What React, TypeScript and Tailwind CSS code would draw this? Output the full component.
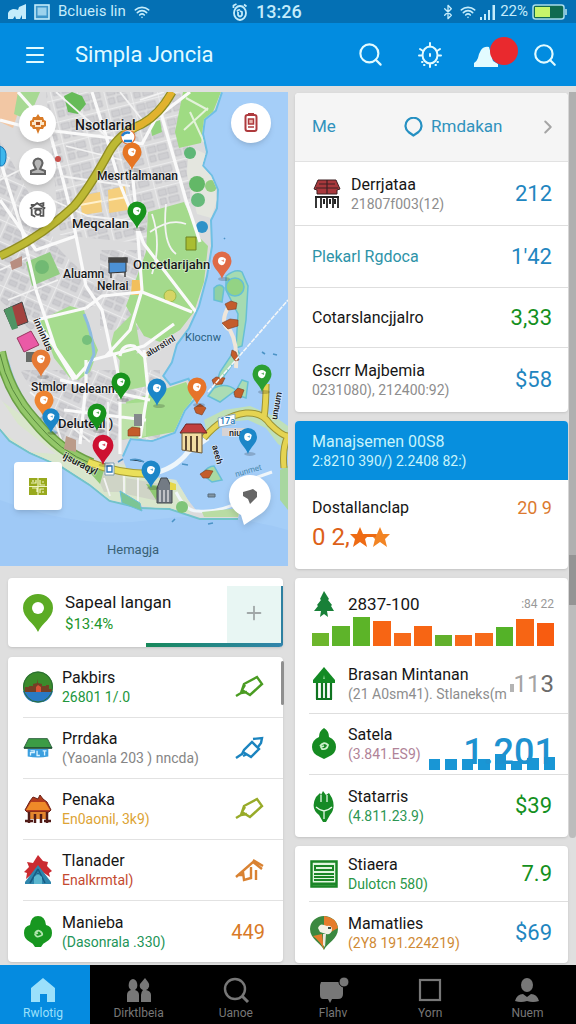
import type { ReactNode } from "react";
import { Bluetooth, ChevronRight, Menu, Plus, Search, Wifi } from "lucide-react";

const BLUE = "#1f86c0";
const GREEN = "#149021";

function StatusBar() {
  return (
    <div className="flex h-[23px] items-center bg-[#0470b4] px-2 text-[15px] leading-none text-[#c4ecfb]">
      <div className="flex w-2/5 items-center gap-2">
        <svg width="18" height="16" viewBox="0 0 18 16" fill="currentColor">
          <path d="M0 15V9q1-3 5-4 3 0 5 1l1-3 7-3v15h-4v-4l-2 4H8l-1-3-2 3z" />
        </svg>
        <svg width="16" height="16" viewBox="0 0 16 16" fill="currentColor" stroke="currentColor">
          <rect x="1" y="1" width="14" height="14" fillOpacity="0.3" strokeWidth="1.6" />
          <rect x="3.5" y="3.5" width="9" height="8" fillOpacity="0.7" stroke="none" />
        </svg>
        <span className="whitespace-nowrap">Bclueis lin</span>
        <Wifi size={16} strokeWidth={2.4} />
      </div>
      <div className="flex items-center gap-2">
        <svg width="16" height="18" viewBox="0 0 16 18" fill="none" stroke="currentColor" strokeWidth="1.8">
          <ellipse cx="8" cy="10" rx="6" ry="7" />
          <path d="M5 8.500q1-2 3-1.500M6 9v3q2 3 4 0V9l-2-1" />
          <path d="M1.500 5V2.500l3-1.500M12 1.500l2.500 2" />
        </svg>
        <span className="text-[18px] font-medium">13:26</span>
      </div>
      <div className="flex flex-1 items-center justify-end gap-1">
        <Bluetooth size={16} strokeWidth={2} />
        <Wifi size={16} strokeWidth={2.4} />
        <svg width="16" height="16" viewBox="0 0 16 16" fill="currentColor">
          <path d="M0 13h2v3H0zM4 10h2v6H4zM8 6h2v10H8zM12.500 1h2.500v15h-2.500z" />
        </svg>
        <span>22%</span>
        <svg width="36" height="16" viewBox="0 0 36 16">
          <rect x="1" y="1" width="31" height="14" rx="2.500" fill="#0f6a50" stroke="#a8dcec" strokeWidth="1.5" />
          <rect x="3" y="3" width="15" height="10" fill="#c8f56a" />
          <path d="M34 5v6" stroke="#8ac6dc" strokeWidth="2" />
        </svg>
      </div>
    </div>
  );
}

function Header() {
  return (
    <header className="flex h-[63px] items-center bg-[#028ce0] pr-[18px] pl-[23px] text-[#e2fbff]">
      <button type="button" aria-label="Menu">
        <Menu size={24} strokeWidth={2.2} />
      </button>
      <h1 className="ml-7 flex-1 text-[22px] leading-none">Simpla Joncia</h1>
      <div className="flex items-center">
        <button type="button" aria-label="Search">
          <Search size={27} strokeWidth={1.9} />
        </button>
        <button type="button" aria-label="Settings" className="ml-8">
          <svg width="28" height="28" viewBox="0 0 28 28" fill="none" stroke="currentColor" strokeWidth="2" strokeLinecap="round">
            <ellipse cx="14" cy="14" rx="7.500" ry="8.500" />
            <path d="M14 2v3.500M14 22.500V26M4 8l3 2M24 8l-3 2M3 14.500h2.500M22.500 14.500H25M6 21h.5M22 21h-.5M8 24h.5M20 24h-.5M14 13v2" />
          </svg>
        </button>
        <button type="button" aria-label="Notifications" className="relative ml-7">
          <svg width="28" height="28" viewBox="0 0 28 28" fill="currentColor">
            <path d="M2 22q3-2 4-5 1-5 3-8 3-4 8-3l4 14 5 3v3H2z" />
          </svg>
          <span className="absolute -top-1 left-[18px] size-7 rounded-full bg-[#e9292e]" />
        </button>
        <button type="button" aria-label="Find" className="ml-8">
          <Search size={26} strokeWidth={2} />
        </button>
      </div>
    </header>
  );
}

type PinProps = { x: number; y: number; color: string; scale?: number };

function Pin({ x, y, color, scale = 1 }: PinProps) {
  return (
    <g transform={`translate(${x} ${y}) scale(${scale})`}>
      <ellipse cx="2" cy="0" rx="6" ry="2" fill="#000" fillOpacity="0.18" />
      <path d="M0 0C-2-7-9.500-11-9.500-18a9.500 9.500 0 0 1 19 0C9.500-11 2-7 0 0z" fill={color} />
      <path d="M-4-18q0-4 4-4 2 0 4 2l-1 4q-2 3-4 2-3-1-3-4z" fill="#fff" />
      <path d="M-1-18.500l3-1v2.500z" fill={color} fillOpacity="0.7" />
    </g>
  );
}

const PINS: PinProps[] = [
  { x: 132, y: 170, color: "#e67523" },
  { x: 137, y: 229, color: "#17931c" },
  { x: 222, y: 279, color: "#df6a46" },
  { x: 41, y: 377, color: "#e67a35" },
  { x: 44, y: 418, color: "#ee8430" },
  { x: 51, y: 433, color: "#1c86c8", scale: 0.9 },
  { x: 121, y: 400, color: "#17931c" },
  { x: 97, y: 431, color: "#17931c" },
  { x: 157, y: 406, color: "#1c86c8" },
  { x: 197, y: 405, color: "#e6742a" },
  { x: 262, y: 392, color: "#2c9f33" },
  { x: 248, y: 454, color: "#1c86c8", scale: 0.95 },
  { x: 103, y: 465, color: "#cd1030", scale: 1.1 },
  { x: 151, y: 488, color: "#1c86c8" },
];

const MAP_LABELS = [
  { x: 75, y: 130, text: "Nsotlarial", size: 14 },
  { x: 97, y: 180, text: "Mesrtlalmanan", size: 12 },
  { x: 72, y: 228, text: "Meqcalan", size: 13 },
  { x: 63, y: 278, text: "Aluamn", size: 12 },
  { x: 97, y: 290, text: "Nelrai", size: 12 },
  { x: 133, y: 269, text: "Oncetlarijahn", size: 13 },
  { x: 31, y: 391, text: "Stmlor", size: 12 },
  { x: 71, y: 393, text: "Ueleanm", size: 12 },
  { x: 58, y: 428, text: "Deluteal )", size: 13 },
];

function MapDrawing() {
  return (
    <svg viewBox="0 92 288 474" className="block w-full" role="img" aria-label="Map">
      <defs>
        <pattern id="blocks" width="26" height="22" patternUnits="userSpaceOnUse" patternTransform="rotate(-14)">
          <rect width="26" height="22" fill="#dcdcdd" />
          <path d="M3 3h8v6H3zM13 3h9v6h-9zM3 12h6v6H3zM12 12h10v6H12z" fill="#cfcfd2" stroke="#bcbcc0" strokeWidth="0.7" />
          <path d="M0 0h26M0 0v22" stroke="#f1f1f1" strokeWidth="1.4" />
        </pattern>
        <pattern id="blocks2" width="24" height="20" patternUnits="userSpaceOnUse" patternTransform="rotate(24)">
          <rect width="24" height="20" fill="#d9d9db" />
          <path d="M3 3h7v5H3zM12 3h8v5h-8zM3 11h8v5H3zM14 11h6v5h-6z" fill="#cbcbcf" stroke="#bbbbc0" strokeWidth="0.6" />
          <path d="M0 0h24M0 0v20" stroke="#f2f2f2" strokeWidth="1.3" />
        </pattern>
        <clipPath id="land">
          <path d="M0 92H221L215 110 204 119 202 134 206 152 202 166 211 176 217 190 216 208 210 220 211 246 206 276 198 306 188 328 176 344 171 362 162 376 170 386 188 380 196 396 184 410 174 432 152 440 130 438 122 456 126 468 146 476 176 480 188 500 196 510 240 512 238 518 200 518 170 508 140 507 110 500 90 484 62 466 30 452 10 440 0 428z" />
        </clipPath>
      </defs>
      <rect y="92" width="288" height="474" fill="#a5cef8" />
      <path d="M0 500q80 30 150 20t138 10v36H0z" fill="#9fc9f6" />
      <path d="M221 92L215 110 204 119 202 134 206 152 202 166 211 176 217 190 216 208 210 220 211 246 206 276 198 306 188 328 176 344 171 362 162 376 170 386 188 380 196 396 184 410 174 432 152 440 130 438 122 456" fill="none" stroke="#6fc0e4" strokeWidth="4" />
      <path d="M0 428L10 440 30 452 62 466 90 484 110 500 140 507 170 508 200 518 238 518" fill="none" stroke="#72c3c9" strokeWidth="4" />
      <g clipPath="url(#land)">
        <rect y="92" width="288" height="474" fill="#dbdbdc" />
        <path d="M46 92H190V250L160 245 60 235z" fill="url(#blocks)" />
        <path d="M0 140L60 250 110 300 30 330 0 300z" fill="url(#blocks2)" />
        <path d="M100 250h44v80h-44zM20 370h140v70H60z" fill="url(#blocks2)" />
        <path d="M0 92h25l-12 36-13-6z" fill="#f2c7a4" />
        <path d="M18 92h22l-12 28-14-6z" fill="#a7d993" />

        <path d="M183 92h38l-10 25-8 14-2 12-22 5-4-16z" fill="#9fdb83" />
        <path d="M184 130l24-22M190 112l14 30M186 98l22 12" stroke="#e3f2da" strokeWidth="2" fill="none" />
        <path d="M188 146l18 8 8 26 3 20-6 18-14-4-10-40z" fill="#e4e6df" />
        <circle cx="190" cy="153" r="6" fill="#5fb777" />
        <circle cx="197" cy="184" r="8" fill="#63b867" />
        <circle cx="211" cy="186" r="6" fill="#93cf81" />
        <circle cx="198" cy="200" r="7" fill="#66ba7b" />
        <circle cx="202" cy="227" r="6" fill="#2f92c8" />
        <path d="M148 212l36-10 16 36 8 8-4 36-10 30-14 18-20 12-16-6-18-30 20-54z" fill="#a4da8c" />
        <path d="M114 332l20-20 6 36-14 20-16-20zM120 356l26-4 2 34-30 6z" fill="#aadc94" />
        <path d="M40 320l30-14 14 4 6 22 8 18-8 22-12 8-8-2-16-20z" fill="#a6dc8f" />
        <path d="M26 262l24-10 10 22-28 12z" fill="#93cd83" />
        <circle cx="42" cy="267" r="7" fill="#71b973" />
        <path d="M64 96l8-4 10 4 4 8-8 10-10-2z" fill="#66bb58" />
        <path d="M150 124l10-4 2 12-10 4z" fill="#93d37e" />
        <path d="M80 196l20-4 2 20-20 3zM108 190l17-4 3 24-19 3z" fill="#f5cf7d" />
        <path d="M80 205l22-4M109 200l18-3" stroke="#fff1cc" strokeWidth="2" />
        <path d="M132 280h9v15h-10z" fill="#f2bf5c" />
        <circle cx="170" cy="296" r="6" fill="#d6d564" stroke="#9bb94b" />
        <path d="M126 402l60-20 8 14-20 36-44 8z" fill="#a4dc8c" />
        <path d="M120 404l26-2v34l-26 4z" fill="#bde2a9" />
        <path d="M0 428l10 12 100 60 80 14V470L90 462 0 400z" fill="#d9e6cc" />
        <path d="M0 398L18 424 56 454 30 452 0 430z" fill="#dedede" />
        <path d="M92 466l30 8 2 18-20 0zM126 478l46 8v18l-46-10z" fill="#cfd4c6" />
        <path d="M84 466l20 4-4 14zM146 484l14 2-4 14z" fill="#8fc873" />

        <g stroke="#fafafa" fill="none" strokeWidth="3.2" strokeLinejoin="round">
          <path d="M0 120l30 8 82 10 30 6 14-26 34-26M92 92l14 44 14 48 24 60 52 68" />
          <path d="M18 92l30 34 14 50 10 40 14 70 16 24 10 46M0 160l22 70 14 60 20 60 18 30" />
          <path d="M0 200l36 50 40-14M130 150l6 60 6 80 -12 40 -24 26M160 110l26 90 14 42" />
          <path d="M86 308l16-12 40-4 50 20M86 308l-50 12M36 320l40 58 16-18 52-14 30-22" />
          <path d="M86 360v24l-6 60M114 354l6 30v70M144 350l4 40-8 48M60 380l90 20M64 410l82 10" />
          <path d="M120 356q2-12 14-10l12 12" />
        </g>
        <g stroke="#f3f3f3" fill="none" strokeWidth="1.8">
          <path d="M56 92l50 44M66 146l56 14M60 176l70 10M52 200l36 16 50 6M120 92l24 30M140 100l24-8" />
          <path d="M0 180l20-10M0 270l30-14M8 300l50-20M48 400l20 60M30 392l60 50M108 402v44" />
          <path d="M152 214q10 30 0 60M166 204q-4 40 10 50M150 232q20-14 36-8" />
          <path d="M104 478l6 18M124 476v26M138 478v26" />
        </g>
        <path d="M84 314q8 18 10 40l-8 20" stroke="#8dbbe0" strokeWidth="3" fill="none" />
        <circle cx="87" cy="340" r="5" fill="#76c07c" />
        <path d="M6 360q14 52 50 74" stroke="#9cc9ea" strokeWidth="5" fill="none" />
      </g>

      <path d="M172 92Q160 114 142 124 118 134 108 154 88 190 74 206 40 238 0 256" fill="none" stroke="#8f8c22" strokeWidth="9" />
      <path d="M172 92Q160 114 142 124 118 134 108 154 88 190 74 206 40 238 0 256" fill="none" stroke="#bdb934" strokeWidth="6.500" />
      <path d="M172 92Q160 114 142 124 134 128 128 132" fill="none" stroke="#e2b22e" strokeWidth="6.500" />
      <path d="M0 352Q8 392 34 420 60 452 92 464" fill="none" stroke="#6a9f45" strokeWidth="12" />
      <path d="M0 352Q8 392 34 420 60 452 92 464" fill="none" stroke="#93c769" strokeWidth="9" />
      <path d="M0 354Q8 392 34 420 60 452 92 464" fill="none" stroke="#55883b" strokeWidth="1" />
      <path d="M88 462Q120 474 150 474" fill="none" stroke="#a79c34" strokeWidth="8" />
      <path d="M88 462Q120 474 150 474" fill="none" stroke="#eae05a" strokeWidth="6" />
      <path d="M150 474q24-4 38-22l20-14" fill="none" stroke="#eef6fb" strokeWidth="5" />

      {/* eastern peninsula */}
      <path d="M204 420l20-10 26-4 24 10 14 10v24l-10-6-12-16-18-8-22 2-18 16z" fill="#bfe0b8" />
      <path d="M280 470l8-4v44l-8-10z" fill="#a8d7a0" />
      <path d="M204 438Q222 416 246 413 262 412 270 424 282 436 288 436M266 384q0 20-2 34M288 436q-6 12-4 32" fill="none" stroke="#9c9336" strokeWidth="7" />
      <path d="M204 438Q222 416 246 413 262 412 270 424 282 436 288 436M266 384q0 20-2 34M288 436q-6 12-4 32" fill="none" stroke="#e5d452" strokeWidth="5" />
      <path d="M176 492q10 20 22 19 20 2 44-10M238 484l34-12" fill="none" stroke="#f0f6fa" strokeWidth="3" />
      <path d="M202 512l38-4-2 9h-34z" fill="#b9dca3" />
      <path d="M120 491l20 12 2 8-20-8z" fill="#7cc596" stroke="#6cc0d8" />
      <circle cx="182" cy="507" r="6" fill="#7fc578" />

      {/* islands */}
      <g stroke="#67bfd4" strokeWidth="1.5">
        <path d="M226 276q10-8 16-4l6 14-2 34-4 26-6 2 2-34-12-24z" fill="#a5dbb2" />
        <path d="M214 288q6-6 10 0l-2 14-8-2z" fill="#8fd0a4" />
        <path d="M214 390l6-18 16-24 4 6-16 22-4 14z" fill="#a8dcb4" />
        <path d="M214 388q12-6 22 2l-16 12-12-6zM234 394l8-14 6 2-2 16z" fill="#abdcb4" />
        <path d="M202 474q6-8 12-8l8 14-10 2z" fill="#a9d9a2" />
        <circle cx="235" cy="287" r="9" fill="#93d384" />
      </g>
      <path d="M230 304q-12 20 0 26 8 14 6 38" stroke="#efe6da" strokeWidth="4" fill="none" />
      <g fill="#c35c2a" stroke="#7c3c20" strokeWidth="0.6">
        <path d="M225 304l6-3 6 2-1 6-8 1zM222 323l8-4 8 1v6l-10 3zM232 350l4 2 3 8-4 1-4-6zM212 380l4-3 9 1-3 6-8 1zM234 392l4-4 6 2-3 8-6-1zM194 408l6-4 6 4-4 7-6-2zM200 474l6-4 7 1-4 7h-6zM128 430l4-3 8 1v8h-12z" />
      </g>
      <path d="M208 392l80-92" stroke="#f3f6f8" strokeWidth="1.6" fill="none" strokeDasharray="5 1" />
      <path d="M262 352l3 2M273 354l4 1M224 238l1 1M118 462l5-3M130 460q8-2 14 2M172 522l3-3M208 524l5-1M182 464l6 1" stroke="#4b93c6" strokeWidth="1.6" />

      {/* landmarks */}
      <path d="M0 146q7 3 6 12t-6 8z" fill="#3cb6ec" stroke="#1477b6" />
      <path d="M4 310l18-8 6 20-16 6z" fill="#a3423e" stroke="#444" />
      <path d="M4 310l8-4 6 22-6 2z" fill="#4f9464" />
      <path d="M17 338l14-7 8 14-15 7z" fill="#ea5aa6" stroke="#99375f" />
      <path d="M10 262l12-6v10l-10 4z" fill="#b88e80" />
      <path d="M26 352h10v10H26z" fill="#676b67" />
      <path d="M109 260l17-2v14l-17 1z" fill="#4c91d5" stroke="#333" />
      <path d="M109 258h18v4h-18zM111 273v5M125 272v5" fill="#444" stroke="#444" strokeWidth="1.5" />
      <path d="M186 237h10v13h-10z" fill="#a9bd31" stroke="#6e8320" />
      <circle cx="128" cy="137" r="7" fill="#fff" stroke="#e4743a" strokeWidth="1.2" />
      <path d="M122 136q3-5 8-3M124 141h8" stroke="#257fcd" strokeWidth="2.4" fill="none" />
      <circle cx="58" cy="159" r="3" fill="#c9504b" />
      <path d="M180 433l6-9h15l6 9z" fill="#c13f3f" stroke="#6d2525" />
      <path d="M182 433h20v20l-20-3z" fill="#f2dca2" stroke="#6e5a39" />
      <path d="M186 436v14M191 436v15M197 436v16" stroke="#5d4630" strokeWidth="2" />
      <path d="M157 488l4-10h6l5 10v15h-15z" fill="#737b84" stroke="#40464b" />
      <path d="M160 490v12M164 490v12M168 490v12" stroke="#d9dadc" strokeWidth="1.5" />
      <path d="M170 482l6 2v6h-6z" fill="#e6d748" />
      <path d="M218 418l17-4v10l-16 3z" fill="#fff" stroke="#8aa9bd" />
      <path d="M222 428h24v8h-24z" fill="#d7d3d4" />
      <path d="M134 414h8v12h-8z" fill="#85898c" />
      <path d="M105 463h9v12h-9z" fill="#fff" stroke="#7c9db2" />
      <path d="M107 466h5v6h-5z" fill="none" stroke="#2c78b8" strokeWidth="1.4" />
      <path d="M66 436l10 4v12l-12-3z" fill="#bb9b89" />
      <path d="M208 494h7v3h-7z" fill="#8295a2" stroke="#596d7c" />

      <g fill="#16171a" stroke="#fff" strokeOpacity="0.5" strokeWidth="1.5" paintOrder="stroke" fontWeight="500">
        {MAP_LABELS.map((label) => (
          <text key={label.text} x={label.x} y={label.y} fontSize={label.size}>
            {label.text}
          </text>
        ))}
        <text transform="translate(148 357) rotate(-31)" fontSize="9">alurstinl</text>
        <text transform="translate(33 320) rotate(66)" fontSize="10">inninlus</text>
        <text transform="translate(62 458) rotate(27)" fontSize="10">ijsuraqyl</text>
        <text transform="translate(212 446) rotate(75)" fontSize="9">aeeh</text>
        <text transform="translate(277 420) rotate(-80)" fontSize="9">unuum</text>
        <text x="229" y="436" fontSize="9">niu</text>
        <text x="220" y="424" fontSize="9" fill="#1d78bb">17a</text>
      </g>
      <text x="185" y="341" fontSize="11" fill="#285e7f">Klocnw</text>
      <text x="236" y="477" fontSize="8" fill="#4787ac" transform="rotate(-16 236 477)">nunmet</text>
      <text x="107" y="554" fontSize="13" fill="#3a6275">Hemagja</text>

      {PINS.map((pin) => (
        <Pin key={`${pin.x}-${pin.y}`} {...pin} />
      ))}
    </svg>
  );
}

function MapPanel() {
  const round = "flex size-[37px] items-center justify-center rounded-full bg-white shadow-md";
  return (
    <section className="relative">
      <MapDrawing />
      <div className="absolute top-[13px] left-[19px] flex flex-col gap-[6px]">
        <button type="button" aria-label="Compass" className={round}>
          <svg width="20" height="20" viewBox="0 0 20 20" fill="#d97b26">
            <path d="M10 0l2 3h3l1 3 2 1v5l-2 1-1 2h-3l-2 5-2-5H5l-1-2-2-1V7l2-1 1-3h3z" />
            <path d="M6 6h8v2h2v3h-3v2H7v-2H4V8h2z" fill="#fbe6c8" />
            <path d="M8 8h4v3H8z" fill="#b4541c" />
          </svg>
        </button>
        <button type="button" aria-label="Person" className={round}>
          <svg width="18" height="20" viewBox="0 0 18 20" fill="#b6b6b6" stroke="#636363" strokeWidth="2">
            <path d="M9 1.500a4.500 4.500 0 0 1 4 6.500l-2 4 5 2v3H2v-3l5-2-2-4a4.500 4.500 0 0 1 4-6.500z" />
          </svg>
        </button>
        <button type="button" aria-label="Home" className={round}>
          <svg width="18" height="17" viewBox="0 0 20 18" fill="none" stroke="#555" strokeWidth="2">
            <path d="M1 8l8-6 9 6M3 8v7l4 2M16 8v8h-4M2 4h4M12 3l4-1v3" />
            <circle cx="10" cy="12" r="3" />
            <path d="M5 8h10" />
          </svg>
        </button>
      </div>
      <button type="button" aria-label="Card" className="absolute top-[11px] right-[17px] flex size-10 items-center justify-center rounded-full bg-white shadow-md">
        <svg width="14" height="20" viewBox="0 0 14 20" fill="none" stroke="#ae3a3d" strokeWidth="2">
          <rect x="1.500" y="2" width="11" height="16" rx="2" />
          <path d="M4 1.500h6" strokeWidth="3" />
          <rect x="4.500" y="6" width="5" height="5" fill="#e9b5ad" strokeWidth="1.5" />
          <path d="M4 14h6" strokeWidth="1.5" />
        </svg>
      </button>
      <button type="button" aria-label="Layers" className="absolute bottom-[56px] left-[14px] flex size-12 items-center justify-center rounded bg-white shadow-md">
        <svg width="18" height="17" viewBox="0 0 18 17">
          <rect width="18" height="17" fill="#98a91d" />
          <path d="M2 5h5V2M11 2v5h5M3 10h5v4M11 15v-4h4M9 0v17M0 8.500h18M4 2v2M14 13v2M13 4h2" stroke="#eef3c1" strokeWidth="1.2" fill="none" />
        </svg>
      </button>
      <button type="button" aria-label="Locate" className="absolute right-[16px] bottom-[40px] drop-shadow-md">
        <svg width="44" height="52" viewBox="0 0 44 52">
          <path d="M22 1a21 21 0 0 1 12 38L16 51 13 41A21 21 0 0 1 22 1z" fill="#fff" />
          <path d="M15 18l7-2 3-1 4 3v5l-7 7-2-5-5-3z" fill="#666" />
        </svg>
      </button>
    </section>
  );
}

const ICONS: Record<string, ReactNode> = {
  house: (
    <svg width="28" height="30" viewBox="0 0 28 30">
      <path d="M5 1h18l4 9-3 1v4H4v-4l-3-1z" fill="#a8383c" stroke="#3d2023" />
      <path d="M3 9h22M6 5h16M14 1v14" stroke="#3d2023" strokeWidth="1.2" />
      <path d="M2 17h24v2H2z" fill="#222" />
      <path d="M3 18v11M8 18v11M14 18v11M20 18v11M25 18v11" stroke="#222" strokeWidth="1.800" />
      <path d="M11 20v5M17 20v5M22 20v5" stroke="#222" strokeWidth="2" />
    </svg>
  ),
  globe: (
    <svg width="30" height="32" viewBox="0 0 30 32">
      <ellipse cx="15" cy="16" rx="15" ry="15.500" fill="#3b8b2b" />
      <path d="M0 20h30q-3 11.500-15 11.500T0 20z" fill="#2a7ac5" />
      <path d="M2 21v-5h4v-1h4v-2l4-1V8l1 4 4 1v2h4v-1h3v4h3v3z" fill="#744025" />
      <path d="M13 21v-5l2-2 3 2v5z" fill="#d65337" />
      <ellipse cx="15" cy="16" rx="14.500" ry="15" fill="none" stroke="#2a6b36" />
    </svg>
  ),
  stall: (
    <svg width="32" height="22" viewBox="0 0 32 22">
      <path d="M6 1h20l5 10H1z" fill="#3c9c45" stroke="#2a5f3a" />
      <path d="M1 11h30" stroke="#1f4c35" strokeWidth="1.6" />
      <path d="M5 12h22v8q-11 2-22 0z" fill="#3b9fdf" />
      <path d="M8 14h4v2H8v3M15 14v5h3M21 14h4M23 14v5" stroke="#d8f2ff" strokeWidth="1.4" fill="none" />
    </svg>
  ),
  temple: (
    <svg width="28" height="30" viewBox="0 0 28 30">
      <path d="M6 7l3-4 5 2 2-4 3 4 4 3 4 8-2 2H3l-2-2z" fill="#b13b1d" stroke="#6c2015" />
      <path d="M7 8h14l5 8H2z" fill="#ee8a28" />
      <path d="M4 18h20v7H4z" fill="#e4862e" />
      <path d="M5 18v11M11 20v9M17 20v9M23 18v11M1 27h8M20 27h7" stroke="#511c18" strokeWidth="2.500" />
    </svg>
  ),
  tent: (
    <svg width="28" height="30" viewBox="0 0 28 30">
      <path d="M14 0l5 6 5 1-1 4 5 5-3 2 1 4-12-8L2 24l1-6-3-1 5-5-2-5 6 1z" fill="#ca2b31" />
      <path d="M14 10l13 17v2H1v-2z" fill="#2e86ad" />
      <path d="M14 14L6 28M14 14l7 14M14 18v10" stroke="#185c83" strokeWidth="1.6" />
      <path d="M10 22l4-3 4 3v7h-8z" fill="#5bb6cf" />
    </svg>
  ),
  clover: (
    <svg width="28" height="32" viewBox="0 0 28 32">
      <path d="M14 0q7 0 8 9 6 1 6 8 0 6-6 9-3 1-5 5h-6q-2-4-5-5-6-3-6-9 0-7 6-8 1-9 8-9z" fill="#179720" />
      <path d="M11 17q3-4 6-1t-1 4q-4 2-5-2l3-1" stroke="#b2e6af" strokeWidth="1.8" fill="none" />
    </svg>
  ),
  tree: (
    <svg width="20" height="26" viewBox="0 0 20 26">
      <path d="M10 0l5 8-1 1 4 5-1 1 3 5h-7l1 6-4-3-4 3 1-6H0l4-5-1-1 4-5-1-1z" fill="#188038" />
    </svg>
  ),
  hut: (
    <svg width="24" height="34" viewBox="0 0 24 34">
      <path d="M12 0l11 13v3H1v-3z" fill="#138a24" />
      <path d="M12 8l-1 4h2z" fill="#7fcb86" />
      <path d="M5 16v16M10 16v16M14 16v16M19 16v16M4 32h16" stroke="#0f7420" strokeWidth="2.200" />
    </svg>
  ),
  bush: (
    <svg width="24" height="32" viewBox="0 0 24 32">
      <path d="M12 0q5 3 5 9 7 3 7 10 0 7-8 10l-4 2-4-2q-8-3-8-10 0-7 7-10 0-6 5-9z" fill="#168b22" />
      <path d="M8 18q4-5 8-1-1 5-6 4l-1-2 3-1" stroke="#cdf0cb" strokeWidth="1.800" fill="none" />
    </svg>
  ),
  leaf: (
    <svg width="22" height="31" viewBox="0 0 22 31">
      <path d="M3 6l4-4 1 2 2-4 3 4 3-2 3 5q4 10-2 17l-4 7h-3l-4-7Q-3 17 3 6z" fill="#168a25" />
      <path d="M11 28V20q-5-1-8-4M11 20q5-1 8-4M8 11V4M14 11V4" stroke="#e6f7e6" strokeWidth="1.300" fill="none" />
    </svg>
  ),
  shelf: (
    <svg width="28" height="28" viewBox="0 0 28 28">
      <rect x="1.500" y="1.500" width="25" height="25" fill="#e2f6e0" stroke="#1a8626" strokeWidth="2.500" />
      <path d="M5 6h18v4H5zM4 14h20M4 20h20M4 17h20" stroke="#1a8626" strokeWidth="2" fill="none" />
      <path d="M2 24h24" stroke="#1a8626" strokeWidth="3" />
    </svg>
  ),
  marker: (
    <svg width="28" height="34" viewBox="0 0 28 34">
      <path d="M14 34C11 27 0 23 0 13a14 13 0 0 1 28 0c0 10-11 14-14 21z" fill="#3b8840" />
      <path d="M14 0q12 1 14 12l-9 5-5-6zM3 20l9-2 2 16Q11 26 3 20z" fill="#e57c2c" />
      <path d="M8 12q2-5 6-3l3 1q5-1 5 4-1 5-6 4l-6-2z" fill="#f3f2e7" />
      <path d="M13 18h3l-1 13-2-2z" fill="#ece8df" />
      <path d="M18 12h3" stroke="#3b4e44" strokeWidth="2" />
    </svg>
  ),
};

function PenMark({ color, kind }: { color: string; kind: "pen" | "flag" | "roof" }) {
  return (
    <svg width="30" height="24" viewBox="0 0 30 24" fill="none" stroke={color} strokeWidth="2.400">
      {kind === "pen" && <path d="M1 21l5-3 3-9L22 2l5 7-12 11-8-5 3-5M6 18l6-1" />}
      {kind === "flag" && <path d="M1 22l6-4 2-4 8-8 7 7-8 8-8-5M18 3l9-1-1 5-3 4M8 20l4-2" />}
      {kind === "roof" && <path d="M1 19L18 4l9 7M18 2l10 6M8 14l1 8 7-2V9M21 12v10M4 17h4" />}
    </svg>
  );
}

type RowProps = {
  icon?: string;
  title: string;
  detail?: string;
  detailColor?: string;
  titleColor?: string;
  children?: ReactNode;
};

function Row({ icon, title, detail, detailColor = "#8d8d8d", titleColor = "#161616", children }: RowProps) {
  return (
    <div className="flex w-full items-center">
      {icon && <span className="mr-[9px] flex w-[30px] shrink-0 justify-center">{ICONS[icon]}</span>}
      <div className="min-w-0 flex-1">
        <p className="text-[16px] leading-5 whitespace-nowrap" style={{ color: titleColor }}>
          {title}
        </p>
        {detail && (
          <p className="text-[14px] leading-[18px] whitespace-nowrap" style={{ color: detailColor }}>
            {detail}
          </p>
        )}
      </div>
      {children}
    </div>
  );
}

function Amount({ color, children }: { color: string; children: ReactNode }) {
  return (
    <span className="shrink-0 text-[22px] leading-none" style={{ color }}>
      {children}
    </span>
  );
}

const PLACES: { icon: string; title: string; detail: string; color: string; mark: ReactNode }[] = [
  { icon: "globe", title: "Pakbirs", detail: "26801 1/.0", color: "#22963c", mark: <PenMark kind="pen" color="#4a9c22" /> },
  { icon: "stall", title: "Prrdaka", detail: "(Yaoanla 203 ) nncda)", color: "#858585", mark: <PenMark kind="flag" color="#1b84bf" /> },
  { icon: "temple", title: "Penaka", detail: "En0aonil, 3k9)", color: "#dda435", mark: <PenMark kind="pen" color="#98ab29" /> },
  { icon: "tent", title: "Tlanader", detail: "Enalkrmtal)", color: "#c4492f", mark: <PenMark kind="roof" color="#d98232" /> },
  { icon: "clover", title: "Manieba", detail: "(Dasonrala .330)", color: "#229458", mark: <span className="text-[20px] leading-none text-[#d97a28]">449</span> },
];

function LeftCards() {
  return (
    <div className="mt-3 flex flex-1 flex-col gap-[10px] pr-[5px] pl-2">
      <section className="relative flex h-[69px] items-center overflow-hidden rounded bg-white pl-[15px] shadow">
        <svg width="30" height="38" viewBox="0 0 30 38">
          <path d="M15 38C11 29 0 24 0 14a15 14 0 0 1 30 0c0 10-11 15-15 24z" fill="#5cab24" />
          <circle cx="15" cy="14" r="6" fill="#fff" />
        </svg>
        <div className="ml-3 flex-1">
          <p className="text-[17px] leading-[22px] whitespace-nowrap text-[#161616]">Sapeal langan</p>
          <p className="text-[15px] leading-[22px] text-[#22962c]">$13:4%</p>
        </div>
        <button type="button" aria-label="Add" className="mt-2 flex h-[61px] w-14 items-center justify-center border-r-2 border-[#2d7fa0] bg-[#e8f6f3] pb-2 text-[#a1a8a8]">
          <Plus size={22} strokeWidth={2} />
        </button>
        <div className="absolute right-0 bottom-0 h-1 w-1/2 bg-linear-to-r from-[#17885a] to-[#3284ad]" />
      </section>
      <section className="relative rounded bg-white shadow">
        <ul className="pl-[15px]">
          {PLACES.map((place) => (
            <li key={place.title} className="flex h-[61px] items-center border-b border-[#e2e2e2] pr-[18px] last:border-b-0">
              <Row icon={place.icon} title={place.title} detail={place.detail} detailColor={place.color}>
                {place.mark}
              </Row>
            </li>
          ))}
        </ul>
        <span className="absolute top-1 -right-px h-11 w-[3px] rounded bg-[#8f8f8f]" />
      </section>
    </div>
  );
}

const BARS = [
  { h: 13, c: "#6cb62c" },
  { h: 20, c: "#5eb42a" },
  { h: 29, c: "#5cb428" },
  { h: 25, c: "#f76514" },
  { h: 13, c: "#f76a1a" },
  { h: 20, c: "#f76514" },
  { h: 11, c: "#62b02c" },
  { h: 11, c: "#f76a1a" },
  { h: 13, c: "#f76a1a" },
  { h: 19, c: "#54b228" },
  { h: 27, c: "#f76514" },
  { h: 23, c: "#f85c10" },
];

const BLUE_BARS = [11, 11, 11, 11, 16, 9, 12, 13];

function RightCards() {
  const cell = "flex items-center border-b border-[#dedede] px-[17px] pr-4 last:border-b-0";
  return (
    <div className="flex min-w-0 flex-1 flex-col gap-[9px] pt-px">
      <section className="overflow-hidden rounded bg-white shadow">
        <a href="#rindakan" className="flex h-[69px] items-center border-b border-[#e2e2e2] bg-[#f5f5f5] pr-[9px] pl-[17px] text-[17px] text-[#3092bd]">
          <span className="w-[92px]">Me</span>
          <svg width="19" height="20" viewBox="0 0 19 20" fill="none" stroke="#2590c2" strokeWidth="2.200">
            <path d="M9.500 18.500L4.500 15a8 8 0 1 1 10 0z" />
          </svg>
          <span className="ml-2 flex-1">Rmdakan</span>
          <ChevronRight size={22} strokeWidth={2.200} color="#a5a5a5" />
        </a>
        <div className={`${cell} h-16`}>
          <Row icon="house" title="Derrjataa" detail="21807f003(12)">
            <Amount color={BLUE}>212</Amount>
          </Row>
        </div>
        <div className={`${cell} h-[62px]`}>
          <Row title="Plekarl Rgdoca" titleColor="#2d93a8">
            <Amount color={BLUE}>1'42</Amount>
          </Row>
        </div>
        <div className={`${cell} h-[60px]`}>
          <Row title="Cotarslancjjalro">
            <Amount color={GREEN}>3,33</Amount>
          </Row>
        </div>
        <div className={`${cell} h-16`}>
          <Row title="Gscrr Majbemia" detail="0231080), 212400:92)">
            <Amount color={BLUE}>$58</Amount>
          </Row>
        </div>
      </section>

      <section className="overflow-hidden rounded bg-white shadow">
        <div className="flex h-[59px] items-center bg-[#078fde] px-[17px]">
          <Row title="Manajsemen 00S8" titleColor="#c8f4fb" detail="2:8210 390/) 2.2408 82:)" detailColor="#c8f4fb" />
        </div>
        <div className="flex h-[89px] justify-between px-[17px] pt-[17px] pr-4">
          <div>
            <p className="text-[16px] leading-[22px] text-[#161616]">Dostallanclap</p>
            <p className="flex items-center text-[24px] leading-9 text-[#dd6118]">
              0 2,
              <svg width="40" height="20" viewBox="0 0 40 20" fill="#ee6b14">
                <path d="M10 0l3 7h7l-5 5 2 8-7-5-7 5 2-8-5-5h7z" />
                <path d="M30 0l3 7h7l-5 5 2 8-7-5-7 5 2-8-5-5h7z" fill="#f28424" />
                <path d="M14 7h12v3H14z" />
              </svg>
            </p>
          </div>
          <span className="text-[18px] leading-[22px] text-[#dc7a30]">20 9</span>
        </div>
      </section>

      <section className="rounded bg-white shadow">
        <div className="h-[76px] pt-3 pr-[14px] pl-[17px]">
          <div className="flex h-7 items-center">
            <span className="flex w-6 justify-center">{ICONS.tree}</span>
            <span className="ml-3 flex-1 text-[17px] leading-6 text-[#161616]">2837-100</span>
            <span className="text-[12px] text-[#999]">:84 22</span>
          </div>
          <div className="flex h-7 items-end gap-[3px]">
            {BARS.map((bar, i) => (
              <span key={i} className="flex-1" style={{ height: bar.h, backgroundColor: bar.c }} />
            ))}
          </div>
        </div>
        <div className="relative ml-[14px] flex h-[60px] items-center border-b border-[#dedede] pr-[14px]">
          <Row icon="hut" title="Brasan Mintanan" detail="(21 A0sm41). Stlaneks(m" />
          <div className="flex shrink-0 items-end text-[24px] leading-7 text-[#a4a4a4]">
            <span className="mb-[6px] h-2 w-1 bg-[#b4b4b4]" />
            <span>11</span>
            <span className="text-[#6b6b6b]">3</span>
          </div>
        </div>
        <div className="relative ml-[14px] flex h-[61px] items-center border-b border-[#dedede]">
          <Row icon="bush" title="Satela" detail="(3.841.ES9)" detailColor="#b08398" />
          <div className="absolute right-[13px] bottom-1 flex h-9 w-[126px] items-end gap-[5px]">
            {BLUE_BARS.map((h, i) => (
              <span key={i} className="flex-1 bg-[#1996d5]" style={{ height: h }} />
            ))}
          </div>
          <span className="absolute right-[13px] bottom-1 text-[36px] leading-9 font-medium text-[#1e92d0]">1.201</span>
        </div>
        <div className="ml-[14px] flex h-[62px] items-center pr-4">
          <Row icon="leaf" title="Statarris" detail="(4.811.23.9)" detailColor="#2c9653">
            <Amount color={GREEN}>$39</Amount>
          </Row>
        </div>
      </section>

      <section className="rounded bg-white shadow">
        <div className="ml-[14px] flex h-14 items-center border-b border-[#dedede] pr-4">
          <Row icon="shelf" title="Stiaera" detail="Dulotcn 580)" detailColor="#2a9647">
            <Amount color={GREEN}>7.9</Amount>
          </Row>
        </div>
        <div className="ml-[14px] flex h-[61px] items-center pr-4">
          <Row icon="marker" title="Mamatlies" detail="(2Y8 191.224219)" detailColor="#cf8a35">
            <Amount color={BLUE}>$69</Amount>
          </Row>
        </div>
      </section>
    </div>
  );
}

const TABS: { label: string; icon: ReactNode }[] = [
  {
    label: "Rwlotig",
    icon: <path d="M14 1l12 10v14h-8v-8h-7v8H2V11z" fill="currentColor" />,
  },
  {
    label: "Dirktlbeia",
    icon: (
      <path d="M8 2a5 6 0 0 1 2 11q4 1 4 5v7H2v-7q0-4 4-5A5 6 0 0 1 8 2zM20 1l3 4a5 5 0 0 1-2 8q5 1 5 5v7H16v-7q0-3 2-5a5 5 0 0 1-3-6z" fill="currentColor" />
    ),
  },
  {
    label: "Uanoe",
    icon: (
      <g fill="none" stroke="currentColor" strokeWidth="2.400">
        <circle cx="13" cy="12" r="10" />
        <path d="M20 19l6 6" strokeWidth="3" />
      </g>
    ),
  },
  {
    label: "Flahv",
    icon: (
      <g fill="currentColor">
        <path d="M2 5h17q5 0 5 5v7q0 5-5 5h-6l-2 4-2-4H4q-3 0-3-4V8z" />
        <circle cx="25" cy="5" r="5" stroke="#000" />
      </g>
    ),
  },
  {
    label: "Yorn",
    icon: <rect x="4" y="3" width="20" height="20" fill="none" stroke="currentColor" strokeWidth="2.200" />,
  },
  {
    label: "Nuem",
    icon: (
      <g fill="currentColor">
        <ellipse cx="14" cy="8" rx="6" ry="7" />
        <path d="M2 24q2-7 8-7l4 3 4-3q6 0 8 7-6 2-12 0-6 2-12 0z" />
      </g>
    ),
  },
];

function TabBar() {
  return (
    <nav className="flex h-[59px] bg-black">
      {TABS.map((tab, i) => (
        <button
          key={tab.label}
          type="button"
          className={
            i === 0
              ? "flex w-[90px] flex-col items-center gap-1 bg-[#058be0] pt-3 pr-1 text-[#9be0fb]"
              : "flex flex-1 flex-col items-center gap-1 pt-3 text-[#777]"
          }
        >
          <svg width="28" height="26" viewBox="0 0 28 26" className="overflow-visible">
            {tab.icon}
          </svg>
          <span className="text-[12px] leading-3">{tab.label}</span>
        </button>
      ))}
    </nav>
  );
}

export default function App() {
  return (
    <div className="flex min-h-screen flex-col bg-[#dfdfdf] font-[Roboto,sans-serif]">
      <StatusBar />
      <Header />
      <main className="flex flex-1 pt-[6px]">
        <div className="flex w-1/2 flex-col">
          <MapPanel />
          <LeftCards />
        </div>
        <div className="flex w-1/2 gap-px pl-[7px]">
          <RightCards />
          <div className="flex w-[7px] flex-col pb-[127px]">
            <span className="h-[463px] bg-[#b0b0b0]" />
            <span className="h-[50px] bg-[#949494]" />
            <span className="flex-1 rounded-b bg-[#bcbcbc]" />
          </div>
        </div>
      </main>
      <TabBar />
    </div>
  );
}
